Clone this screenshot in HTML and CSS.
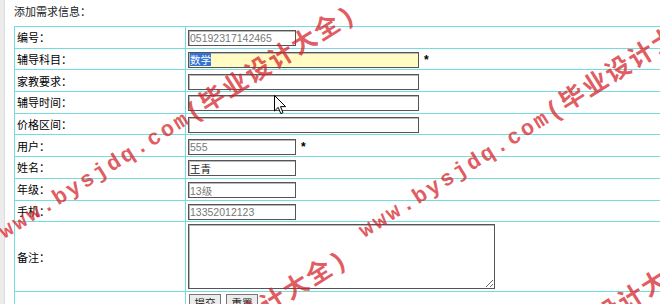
FILE: index.html
```html
<!DOCTYPE html>
<html lang="zh-CN">
<head>
<meta charset="utf-8">
<title>添加需求信息</title>
<link rel="stylesheet" href="styles.css">
</head>
<body>
<div class="page">
  <div class="title">添加需求信息：</div>
  <table class="form">
    <tr>
      <td class="label">编号：</td>
      <td class="field"><input class="inp short ro" type="text" value="05192317142465" readonly></td>
    </tr>
    <tr>
      <td class="label">辅导科目：</td>
      <td class="field"><div class="inp long hl"><span class="sel">数学</span></div><span class="req">*</span></td>
    </tr>
    <tr>
      <td class="label">家教要求：</td>
      <td class="field"><input class="inp long" type="text" value=""></td>
    </tr>
    <tr>
      <td class="label">辅导时间：</td>
      <td class="field"><input class="inp long" type="text" value=""></td>
    </tr>
    <tr>
      <td class="label">价格区间：</td>
      <td class="field"><input class="inp long" type="text" value=""></td>
    </tr>
    <tr>
      <td class="label">用户：</td>
      <td class="field"><input class="inp short ro" type="text" value="555" readonly><span class="req">*</span></td>
    </tr>
    <tr>
      <td class="label">姓名：</td>
      <td class="field"><input class="inp short" type="text" value="王青"></td>
    </tr>
    <tr>
      <td class="label">年级：</td>
      <td class="field"><input class="inp short ro" type="text" value="13级" readonly></td>
    </tr>
    <tr>
      <td class="label">手机：</td>
      <td class="field"><input class="inp short ro" type="text" value="13352012123" readonly></td>
    </tr>
    <tr class="tall">
      <td class="label">备注：</td>
      <td class="field"><textarea class="area"></textarea></td>
    </tr>
    <tr>
      <td class="label"></td>
      <td class="field btns"><button class="btn" type="button">提交</button><button class="btn" type="button">重置</button></td>
    </tr>
  </table>
</div>
<div class="wmlayer">
  <span class="wm wm1">www.bysjdq.com<span class="cjk">(毕业设计大全)</span></span>
  <span class="wm wm2">www.bysjdq.com<span class="cjk">(毕业设计大全)</span></span>
  <span class="wm wm3">www.bysjdq.com<span class="cjk">(毕业设计大全)</span></span>
  <span class="wm wm4">www.bysjdq.com<span class="cjk">(毕业设计大全)</span></span>
</div>
<svg class="cursor" width="13" height="20" viewBox="0 0 13 20"><path d="M0.5 0.5 L0.5 16 L4.2 12.4 L6.8 18.6 L9 17.6 L6.5 11.6 L11.6 11.6 Z" fill="#fff" stroke="#000" stroke-width="1"/></svg>
</body>
</html>
```

FILE: styles.css
```css
html, body {
  margin: 0;
  padding: 0;
  background: #fff;
  overflow: hidden;
}
body {
  width: 660px;
  height: 304px;
  position: relative;
  font-family: "Noto Sans CJK SC", "Liberation Sans", sans-serif;
  font-size: 11px;
  color: #000;
}
.page {
  border-left: 4px solid #ececec;
  box-shadow: inset 1px 0 0 #dcdcdc;
  padding-left: 10px;
  height: 304px;
  box-sizing: border-box;
}
.title {
  height: 26px;
  line-height: 22px;
  color: #222;
}
.form {
  border-collapse: collapse;
  width: 720px;
}
.form td {
  border: 1px solid #74dcdc;
  height: 21.7px;
  padding: 0 2px;
  box-sizing: border-box;
  vertical-align: middle;
  white-space: nowrap;
}
.form .label {
  width: 171px;
  padding-left: 2px;
}
.form .tall td {
  height: 70px;
}
.inp {
  box-sizing: border-box;
  height: 16px;
  margin: 0;
  padding: 0 1px;
  border: 1px solid #555;
  box-shadow: inset 1px 1px 0 #b8b8b8;
  font-family: "Liberation Sans", "Noto Sans CJK SC", sans-serif;
  font-size: 10.5px;
  line-height: 14px;
  color: #222;
  background: #fff;
  vertical-align: middle;
  display: inline-block;
}
.ro {
  color: #777;
}
.short {
  width: 108px;
}
.long {
  width: 231px;
}
.hl {
  background: #fffbc2;
}
.sel {
  background: #3472d6;
  color: #fff;
  font-family: "Noto Sans CJK SC", sans-serif;
  font-size: 10.5px;
  line-height: 13px;
  display: inline-block;
}
.req {
  display: inline-block;
  margin-left: 5px;
  font-family: "Liberation Sans", sans-serif;
  font-weight: bold;
  font-size: 12px;
  vertical-align: middle;
}
.area {
  display: block;
  box-sizing: border-box;
  width: 307px;
  height: 65px;
  margin: 0;
  border: 1px solid #555;
  box-shadow: inset 1px 1px 0 #b8b8b8;
  resize: both;
}
.btns {
  vertical-align: top;
  padding-top: 3px;
}
.btn {
  box-sizing: border-box;
  height: 18px;
  width: 32px;
  margin: 0 4px 0 1px;
  padding: 0;
  border: 1px solid #777;
  background: #ececec;
  font-family: "Noto Sans CJK SC", sans-serif;
  font-size: 10.5px;
  color: #222;
}
.wmlayer {
  position: absolute;
  left: 0;
  top: 0;
  width: 660px;
  height: 304px;
  overflow: hidden;
  pointer-events: none;
}
.wm {
  position: absolute;
  white-space: nowrap;
  font-family: "Liberation Mono", "Noto Sans CJK SC", monospace;
  font-weight: bold;
  font-size: 22px;
  line-height: 24px;
  letter-spacing: 2.6px;
  color: rgba(214, 30, 40, 0.74);
  transform-origin: 0 100%;
  transform: rotate(-32deg);
}
.wm .cjk {
  font-size: 25px;
  line-height: 24px;
  letter-spacing: 2px;
}
.wm1 { left: 8px; top: 220px; }
.wm2 { left: 368px; top: 219px; }
.wm3 { left: 0px; top: 465px; }
.wm4 { left: 358px; top: 462px; }
.cursor {
  position: absolute;
  left: 274px;
  top: 95px;
}
```
